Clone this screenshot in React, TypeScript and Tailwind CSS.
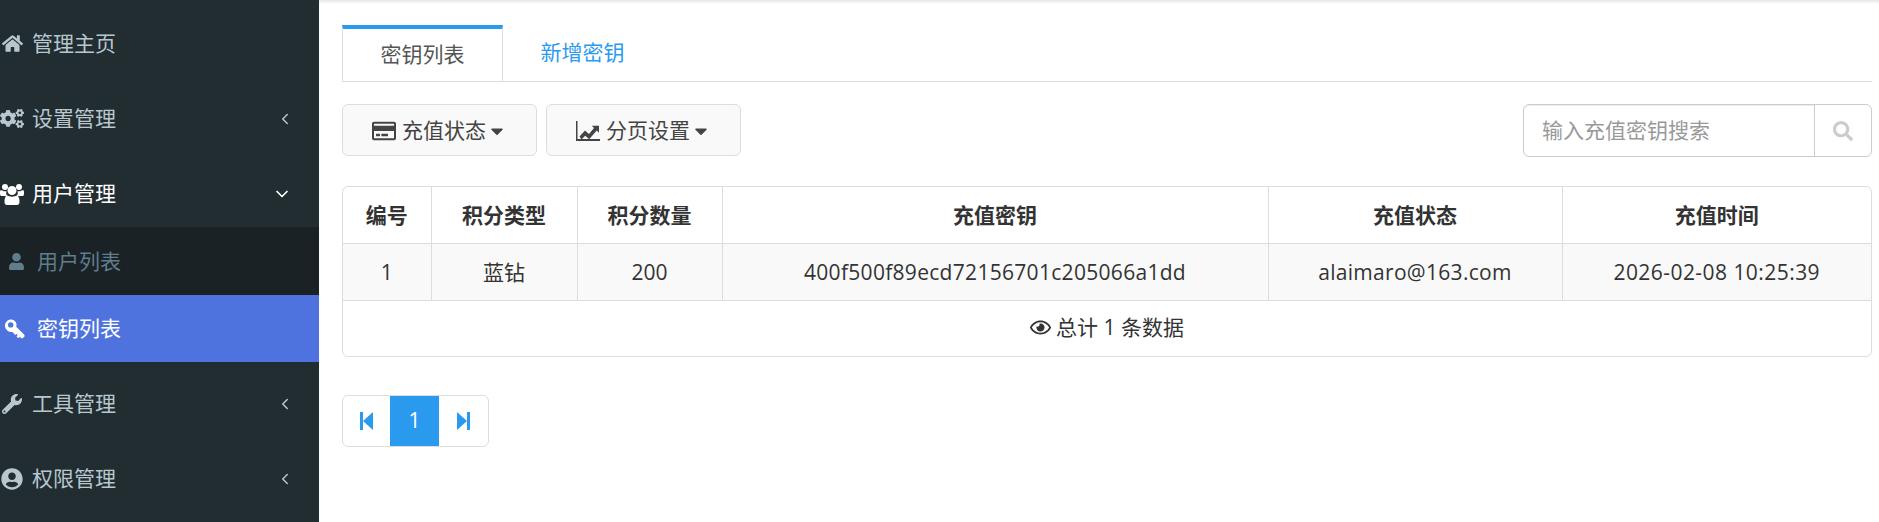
import * as React from "react";
import {
  FaCaretDown,
  FaCogs,
  FaHome,
  FaRegCreditCard,
  FaRegEye,
  FaSearch,
  FaUser,
  FaUserCircle,
  FaWrench,
} from "react-icons/fa";
import { ChevronDown, ChevronLeft } from "lucide-react";

const headers = ["编号", "积分类型", "积分数量", "充值密钥", "充值状态", "充值时间"];
const cells = [
  { text: "1", cls: "" },
  { text: "蓝钻", cls: "" },
  { text: "200", cls: "" },
  { text: "400f500f89ecd72156701c205066a1dd", cls: "tracking-[0.3px]" },
  { text: "alaimaro@163.com", cls: "tracking-[0.3px]" },
  { text: "2026-02-08 10:25:39", cls: "tracking-[0.45px]" },
];

function UsersIcon() {
  return (
    <svg viewBox="0 0 24 22" className="h-[22px] w-[24px]" fill="currentColor">
      <circle cx="5" cy="4" r="3" />
      <circle cx="19" cy="4" r="3" />
      <path d="M0 8.5C0 7.5 1 7 2.5 7.5 4 8.5 5.5 8.5 6.5 8 6 10 6.3 11.5 7 13H1.5C.5 13 0 12 0 11Z" />
      <path d="M24 8.5C24 7.5 23 7 21.500 7.5 20 8.5 18.500 8.500 17.500 8 18 10 17.700 11.500 17 13H22.500C23.500 13 24 12 24 11Z" />
      <circle cx="12" cy="7.500" r="4.500" />
      <path d="M7.500 12.500C9 14 15 14 16.500 12.500 18.500 12.500 19.500 15 19.500 19 19.500 21 18.500 22 17 22H7C5.500 22 4.500 21 4.500 19 4.500 15 5.500 12.500 7.500 12.500Z" />
    </svg>
  );
}

function KeyIcon() {
  return (
    <svg viewBox="0 0 20 20" className="h-[20px] w-[20px]" fill="currentColor">
      <path
        fillRule="evenodd"
        d="M6 0.500a5.500 5.500 0 0 1 5.200 7.300l8.300 8.300v1.400l-1.800 1.800h-1.400l-1.500-1.500-1.500 1.500-1.800-1.800 1.200-1.400-1.200-1.200-1.400 1.200-2.500-3.200a5.500 5.500 0 1 1-2.600-12.400Zm-0.300 2.700a2.700 2.700 0 1 0 0 5.400 2.700 2.700 0 0 0 0-5.400Z"
      />
    </svg>
  );
}

function ChartIcon() {
  return (
    <svg viewBox="0 0 24 20" className="h-[20px] w-[24px]" fill="currentColor">
      <path d="M0 0h1.500v18H24v2H0Z" />
      <path d="M3.500 15.500 9 9.500l4 3.500 5-6-2.200-2.200H23v7l-2.300-2.300-7.500 8.800-4-3.500-3.700 3.700Z" />
    </svg>
  );
}

function StepBack() {
  return (
    <svg viewBox="0 0 13 18" className="h-[18px] w-[13px]" fill="currentColor">
      <path d="M0 0h3v18H0ZM13 0v18L3 9Z" />
    </svg>
  );
}

function StepForward() {
  return (
    <svg viewBox="0 0 13 18" className="h-[18px] w-[13px]" fill="currentColor">
      <path d="M13 0h-3v18h3ZM0 0v18L10 9Z" />
    </svg>
  );
}

function MenuRow({ icon, label, arrow = true }: { icon: React.ReactNode; label: string; arrow?: boolean }) {
  return (
    <div className="flex h-[75px] items-center text-[#b8c7ce]">
      <span className="flex w-[24px] justify-center">{icon}</span>
      <span className="ml-[8px]">{label}</span>
      {arrow && <ChevronLeft size={18} strokeWidth={2} className="ml-auto mr-[25px]" />}
    </div>
  );
}

function Sidebar() {
  return (
    <aside className="w-[319px] shrink-0 bg-[#222d32] pt-[6px] text-[21px]">
      <MenuRow icon={<FaHome className="text-[21px]" />} label="管理主页" arrow={false} />
      <MenuRow icon={<FaCogs className="text-[27px]" />} label="设置管理" />
      <div className="flex h-[71px] items-center pt-[5px] text-white">
        <span className="flex w-[24px] justify-center">
          <UsersIcon />
        </span>
        <span className="ml-[8px]">用户管理</span>
        <ChevronDown size={20} strokeWidth={2} className="ml-auto mr-[27px]" />
      </div>
      <div className="bg-[#1a2226]">
        <div className="flex h-[68px] items-center pl-[8px] pt-px text-[#5f7d8c]">
          <FaUser className="w-[17px] text-[17px]" />
          <span className="ml-[12px]">用户列表</span>
        </div>
        <div className="flex h-[67px] items-center bg-[#4e73df] pl-[5px] pt-px text-white">
          <KeyIcon />
          <span className="ml-[12px]">密钥列表</span>
        </div>
      </div>
      <div className="mt-[4px]">
        <MenuRow icon={<FaWrench className="text-[20px]" />} label="工具管理" />
        <MenuRow icon={<FaUserCircle className="text-[22px]" />} label="权限管理" />
      </div>
    </aside>
  );
}

function Toolbar() {
  return (
    <div className="mt-[22px] flex items-start justify-between">
      <div className="flex gap-[9px]">
        <button className="flex h-[52px] w-[195px] items-center justify-center rounded-[6px] border border-[#ddd] bg-[#f9f9f9] pt-px text-[#444]">
          <FaRegCreditCard className="text-[24px]" />
          <span className="ml-[6px]">充值状态</span>
          <FaCaretDown className="ml-px text-[20px]" />
        </button>
        <button className="flex h-[52px] w-[195px] items-center justify-center rounded-[6px] border border-[#ddd] bg-[#f9f9f9] pt-px text-[#444]">
          <ChartIcon />
          <span className="ml-[6px]">分页设置</span>
          <FaCaretDown className="ml-px text-[20px]" />
        </button>
      </div>
      <div className="flex h-[53px] w-[349px] rounded-[6px] border border-[#ccc]">
        <input
          placeholder="输入充值密钥搜索"
          className="w-[290px] rounded-l-[6px] pl-[18px] pt-px shadow-[inset_0_1px_1px_rgba(0,0,0,0.075)] outline-none placeholder:text-[#999]"
        />
        <span className="flex flex-1 items-center justify-center border-l border-[#ccc] text-[#ccc]">
          <FaSearch className="text-[20px]" />
        </span>
      </div>
    </div>
  );
}

function KeyTable() {
  return (
    <div className="mt-[29px] overflow-hidden rounded-[6px] border border-[#ddd]">
      <table className="w-full table-fixed border-collapse text-center text-[#333]">
        <colgroup>
          <col className="w-[88px]" />
          <col className="w-[146px]" />
          <col className="w-[145px]" />
          <col className="w-[546px]" />
          <col className="w-[294px]" />
          <col />
        </colgroup>
        <thead>
          <tr className="h-[56px]">
            {headers.map((h, i) => (
              <th key={h} className={`border-b border-[#ddd] pt-[2px] font-bold ${i < 5 ? "border-r" : ""}`}>
                {h}
              </th>
            ))}
          </tr>
        </thead>
        <tbody>
          <tr className="h-[57px] bg-[#f9f9f9]">
            {cells.map((c, i) => (
              <td key={c.text} className={`border-b border-[#ddd] pt-[2px] ${c.cls} ${i < 5 ? "border-r" : ""}`}>
                {c.text}
              </td>
            ))}
          </tr>
          <tr className="h-[56px]">
            <td colSpan={6} className="pt-[2px]">
              <span className="inline-flex items-center gap-[5px]">
                <FaRegEye className="text-[21px]" />
                总计 1 条数据
              </span>
            </td>
          </tr>
        </tbody>
      </table>
    </div>
  );
}

function Pagination() {
  return (
    <div className="mt-[38px] flex h-[52px] w-[147px] overflow-hidden rounded-[6px] border border-[#ddd] text-[#2a9aef]">
      <span className="flex w-[47px] items-center justify-center">
        <StepBack />
      </span>
      <span className="flex w-[49px] items-center justify-center bg-[#2a9aef] text-white">1</span>
      <span className="flex flex-1 items-center justify-center">
        <StepForward />
      </span>
    </div>
  );
}

export default function App() {
  return (
    <div className="flex h-[522px] overflow-hidden bg-white font-['Open_Sans','Noto_Sans_CJK_SC',sans-serif] text-[21px]">
      <Sidebar />
      <main className="flex-1 pl-[23px] pr-[7px] pt-[25px] shadow-[inset_0_3px_3px_-1px_rgba(0,0,0,0.1)]">
        <div className="flex h-[57px] border-b border-[#ddd]">
          <div className="flex w-[161px] items-center justify-center border-x border-t-4 border-x-[#ddd] border-t-[#2a9aef] text-[#555]">
            密钥列表
          </div>
          <div className="flex w-[159px] items-center justify-center text-[#2a9aef]">新增密钥</div>
        </div>
        <Toolbar />
        <KeyTable />
        <Pagination />
      </main>
    </div>
  );
}
